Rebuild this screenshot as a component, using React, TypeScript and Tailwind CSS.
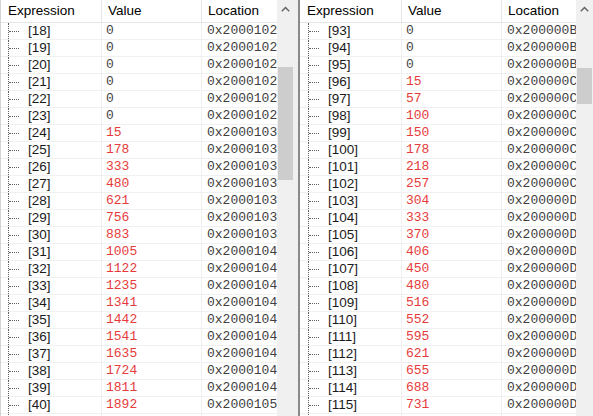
import React from "react";

type Row = { idx: number; val: number; loc: string };

const leftVals = [0, 0, 0, 0, 0, 0, 15, 178, 333, 480, 621, 756, 883, 1005, 1122, 1235, 1341, 1442, 1541, 1635, 1724, 1811, 1892];
const rightVals = [0, 0, 0, 15, 57, 100, 150, 178, 218, 257, 304, 333, 370, 406, 450, 480, 516, 552, 595, 621, 655, 688, 731];

const leftRows: Row[] = leftVals.map((v, i) => {
  const idx = 18 + i;
  const d = idx <= 23 ? "2" : idx <= 30 ? "3" : idx <= 39 ? "4" : "5";
  return { idx, val: v, loc: "0x200010" + d + "8" };
});

const rightRows: Row[] = rightVals.map((v, i) => {
  const idx = 93 + i;
  const d = idx <= 95 ? "B" : idx <= 102 ? "C" : "D";
  return { idx, val: v, loc: "0x200000" + d + "4" };
});

const sans = "font-['Liberation_Sans',Arial,sans-serif]";
const mono = "font-['Liberation_Mono','Courier_New',monospace]";

function Chevron() {
  return (
    <svg width="9" height="6" viewBox="0 0 9 6" className="block">
      <path d="M0.8 5.2 L4.5 1.5 L8.2 5.2" fill="none" stroke="#606060" strokeWidth="1.4" />
    </svg>
  );
}

function Scrollbar({ thumbTop, thumbHeight }: { thumbTop: string; thumbHeight: string }) {
  return (
    <div className="w-[17px] shrink-0 h-full bg-[#f0f0f0] flex flex-col">
      <div className="h-[17px] flex items-center justify-center">
        <Chevron />
      </div>
      <div className={thumbTop} />
      <div className={`${thumbHeight} mx-[1px] bg-[#cdcdcd]`} />
    </div>
  );
}

function Panel({
  rows,
  cols,
  treePad,
  thumbTop,
  thumbHeight,
  leftBorder,
}: {
  rows: Row[];
  cols: [string, string, string];
  treePad: string;
  thumbTop: string;
  thumbHeight: string;
  leftBorder: boolean;
}) {
  return (
    <div className={`flex h-full shrink-0 ${leftBorder ? "border-l border-[#d4d4d4]" : ""}`}>
      <div className="flex flex-col h-full overflow-hidden">
        <div className={`h-[23px] shrink-0 flex border-b border-[#e5e5e5] bg-white text-[13.5px] text-black ${sans}`}>
          <div className={`${cols[0]} h-full border-r border-[#e5e5e5] pl-[7px] flex items-center`}>Expression</div>
          <div className={`${cols[1]} h-full border-r border-[#e5e5e5] pl-[6px] flex items-center`}>Value</div>
          <div className={`${cols[2]} h-full pl-[6px] flex items-center whitespace-nowrap overflow-hidden`}>Location</div>
        </div>
        {rows.map((r) => (
          <div key={r.idx} className="h-[17px] shrink-0 flex border-b border-[#f0f0f0] bg-white">
            <div className={`${cols[0]} h-full border-r border-[#f0f0f0] flex ${treePad}`}>
              <div className="w-[12px] h-full border-l border-dotted border-[#606060] flex items-start">
                <div className="mt-[8px] w-[10px] h-0 border-t border-dotted border-[#606060]" />
              </div>
              <div className={`ml-[8px] text-[13.5px] leading-[16px] text-[#1a1a1a] ${sans}`}>[{r.idx}]</div>
            </div>
            <div
              className={`${cols[1]} h-full border-r border-[#f0f0f0] pl-[4px] text-[13px] leading-[16px] ${mono} ${
                r.val === 0 ? "text-[#444444]" : "text-[#e63b3b]"
              }`}
            >
              {r.val}
            </div>
            <div className={`${cols[2]} h-full pl-[5px] text-[13px] leading-[16px] text-[#404040] whitespace-nowrap overflow-hidden ${mono}`}>
              {r.loc}
            </div>
          </div>
        ))}
        <div className="h-[17px] shrink-0 flex bg-white">
          <div className={`${cols[0]} h-full border-r border-[#f0f0f0] flex ${treePad}`}>
            <div className="w-[12px] h-full border-l border-dotted border-[#606060]" />
          </div>
          <div className={`${cols[1]} h-full border-r border-[#f0f0f0]`} />
          <div className={`${cols[2]} h-full`} />
        </div>
      </div>
      <Scrollbar thumbTop={thumbTop} thumbHeight={thumbHeight} />
    </div>
  );
}

export default function App() {
  return (
    <div className="w-[593px] h-[416px] overflow-hidden flex bg-white">
      <Panel
        rows={leftRows}
        cols={["w-[101px]", "w-[100px]", "w-[75px]"]}
        treePad="pl-[7px]"
        thumbTop="h-[50px]"
        thumbHeight="h-[113px]"
        leftBorder
      />
      <div className="w-[4px] h-full bg-[#f0f0f0] shrink-0" />
      <div className="w-[2px] h-full bg-[#8a8a8a] shrink-0" />
      <Panel
        rows={rightRows}
        cols={["w-[102px]", "w-[100px]", "w-[74px]"]}
        treePad="pl-[8px]"
        thumbTop="h-[51px]"
        thumbHeight="h-[36px]"
        leftBorder={false}
      />
    </div>
  );
}
